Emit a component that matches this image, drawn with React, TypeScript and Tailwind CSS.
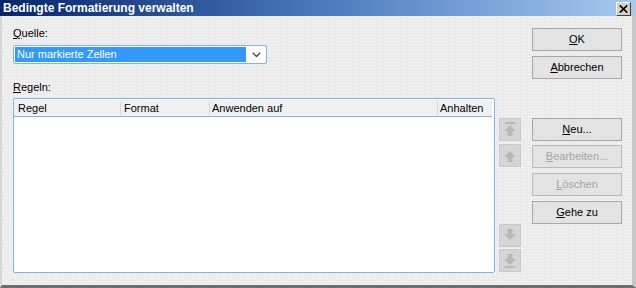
import React from "react";

const FONT = { fontFamily: '"Liberation Sans", Arial, sans-serif' };

function Mn({ text, disabled = false }: { text: string; disabled?: boolean }) {
  return (
    <span className={disabled ? "text-[#a3a3a3]" : "text-black"}>
      <u>{text[0]}</u>
      {text.slice(1)}
    </span>
  );
}

function Btn({ label, disabled = false, className = "" }: { label: string; disabled?: boolean; className?: string }) {
  return (
    <div
      className={`h-[23px] w-[90px] flex items-center justify-center border bg-[#e3e3e3] text-[11px] ${
        disabled ? "border-[#b9b9b9]" : "border-[#a7a7a7]"
      } ${className}`}
    >
      <Mn text={label} disabled={disabled} />
    </div>
  );
}

function ArrowBtn({ dir, bar = false, className = "" }: { dir: "up" | "down"; bar?: boolean; className?: string }) {
  return (
    <div className={`h-[23px] w-[22px] bg-[#d5d5d5] border border-[#c9c9c9] flex items-center justify-center ${className}`}>
      <svg width="20" height="21" viewBox="0 0 20 21">
        <g fill="#b8b8b8" transform={dir === "down" ? "rotate(180 10 10.5)" : undefined}>
          {bar && <rect x="5" y="3" width="10" height="2" />}
          <polygon points="10,6 4,12 7.5,12 7.5,17 12.5,17 12.5,12 16,12" />
        </g>
      </svg>
    </div>
  );
}

export default function App() {
  return (
    <div className="w-[636px] h-[288px] flex flex-col overflow-hidden select-none" style={FONT}>
      {/* title bar */}
      <div className="h-[16px] flex items-center justify-between bg-gradient-to-r from-[#0a246a] via-[#4a78bc] to-[#a6caf0] pl-[3px] pr-[5px]">
        <span className="text-white font-bold text-[12px] leading-none">Bedingte Formatierung verwalten</span>
        <div className="w-[15px] h-[14px] mt-[1px] bg-[#d4d0c8] border-t border-l border-white border-r border-b border-r-[#404040] border-b-[#404040] flex items-center justify-center">
          <svg width="9" height="8" viewBox="0 0 9 8">
            <path d="M0.8 0.5 L8.2 7.5 M8.2 0.5 L0.8 7.5" stroke="#000" strokeWidth="1.7" />
          </svg>
        </div>
      </div>

      {/* body */}
      <div className="flex-1 flex bg-[#ebebeb] bg-[radial-gradient(circle,#fafafa_0.8px,transparent_0.9px)] bg-[length:3px_3px] border-l-2 border-l-[#d6d6d6] border-r-4 border-r-[#c8c8c8] border-b-[3px] border-b-[#6d6d6d] pl-[11px] pt-[11px] text-[11px] text-black">
        {/* left column */}
        <div className="w-[482px] flex flex-col">
          <div className="h-[13px] leading-[13px]">
            <Mn text="Quelle:" />
          </div>
          <div className="mt-[5px] h-[19px] w-[254px] bg-white border border-[#7eb4ea] rounded-[2px] flex items-center pl-[1px]">
            <div className="h-[15px] w-[231px] bg-[#3399ff] text-white leading-[15px] pl-[2px]">Nur markierte Zellen</div>
            <div className="flex-1 flex items-center justify-center">
              <svg width="9" height="6" viewBox="0 0 9 6">
                <path d="M0.8 0.8 L4.5 4.5 L8.2 0.8" stroke="#4a4a4a" strokeWidth="1.4" fill="none" />
              </svg>
            </div>
          </div>
          <div className="mt-[17px] h-[13px] leading-[13px]">
            <Mn text="Regeln:" />
          </div>
          <div className="mt-[4px] h-[175px] bg-white border border-[#7eb4ea] rounded-[2px] pt-[1px] pr-[1px]">
            <div className="h-[17px] bg-[#f0f0f0] flex items-center leading-[13px] mr-[1px] border-b border-b-[#7eb4ea] pt-[1px]">
              <div className="w-[106px] pl-[4px]">Regel</div>
              <div className="w-[89px] pl-[3px] border-l border-l-[#d5d5d5]">Format</div>
              <div className="w-[228px] pl-[2px] border-l border-l-[#d5d5d5]">Anwenden auf</div>
              <div className="flex-1 pl-[2px] border-l border-l-[#d5d5d5]">Anhalten</div>
            </div>
          </div>
        </div>

        {/* move buttons */}
        <div className="ml-[4px] mt-[91px] h-[154px] flex flex-col justify-between">
          <div className="flex flex-col gap-[3px]">
            <ArrowBtn dir="up" bar />
            <ArrowBtn dir="up" />
          </div>
          <div className="flex flex-col gap-[2px]">
            <ArrowBtn dir="down" />
            <ArrowBtn dir="down" bar />
          </div>
        </div>

        {/* action buttons */}
        <div className="ml-[11px] mt-[1px] flex flex-col">
          <Btn label="OK" />
          <Btn label="Abbrechen" className="mt-[5px]" />
          <Btn label="Neu..." className="mt-[39px]" />
          <Btn label="Bearbeiten..." disabled className="mt-[4px]" />
          <Btn label="Löschen" disabled className="mt-[5px]" />
          <Btn label="Gehe zu" className="mt-[5px]" />
        </div>
      </div>
    </div>
  );
}
